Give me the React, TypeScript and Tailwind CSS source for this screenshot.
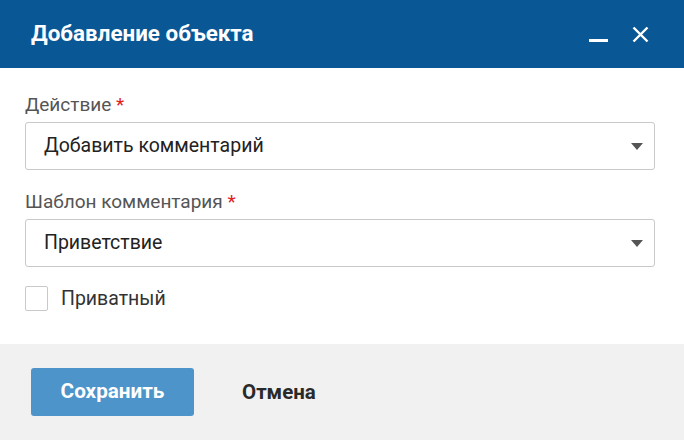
import { useState } from "react";

function Caret() {
    return (
        <svg width="12" height="7" viewBox="0 0 12 7" className="shrink-0">
            <path d="M0 0h12L6 7z" fill="#555" />
        </svg>
    );
}

function SelectField({ label, value }: { label: string; value: string }) {
    return (
        <div>
            <div className="text-[19px] leading-[22px] text-[#555]">
                {label} <span className="text-[#e02020]">*</span>
            </div>
            <div className="mt-[6px] flex h-[48px] items-center justify-between rounded-[3px] border border-[#c9c9c9] bg-white pl-[18px] pr-[11px]">
                <span className="text-[19.5px] text-[#222]">{value}</span>
                <Caret />
            </div>
        </div>
    );
}

export default function App() {
    const [priv, setPriv] = useState(false);

    return (
        <div className="flex h-[440px] w-[684px] flex-col bg-white font-['Roboto',sans-serif]">
            {/* header */}
            <div className="flex h-[68px] shrink-0 items-center justify-between bg-[#0a5796] pl-[31px] pr-[35px]">
                <h1 className="text-[22.4px] font-bold text-white">Добавление объекта</h1>
                <div className="flex items-center gap-[24px]">
                    <svg width="19" height="20" viewBox="0 0 19 20">
                        <rect x="0" y="15" width="19" height="3" fill="#fff" />
                    </svg>
                    <svg width="17" height="17" viewBox="0 0 17 17">
                        <path d="M1.5 1.5l14 14M15.5 1.5l-14 14" stroke="#fff" strokeWidth="2.4" />
                    </svg>
                </div>
            </div>

            {/* body */}
            <div className="flex flex-1 flex-col pl-[25px] pr-[29px] pt-[26px]">
                <SelectField label="Действие" value="Добавить комментарий" />
                <div className="mt-[21px]">
                    <SelectField label="Шаблон комментария" value="Приветствие" />
                </div>
                <label className="mt-[17px] flex cursor-pointer items-center gap-[13px]">
                    <input
                        type="checkbox"
                        checked={priv}
                        onChange={() => setPriv(!priv)}
                        className="h-[25px] w-[23px] appearance-none rounded-[2px] border border-[#c9c9c9] bg-white"
                    />
                    <span className="text-[19.5px] text-[#333]">Приватный</span>
                </label>
            </div>

            {/* footer */}
            <div className="flex h-[96px] shrink-0 items-center bg-[#f1f1f1] pl-[31px]">
                <button className="h-[48px] w-[163px] rounded-[3px] bg-[#4d94cb] text-[20.7px] font-bold text-white">
                    Сохранить
                </button>
                <button className="ml-[48px] text-[20.5px] font-bold text-[#2a2a2a]">Отмена</button>
            </div>
        </div>
    );
}
